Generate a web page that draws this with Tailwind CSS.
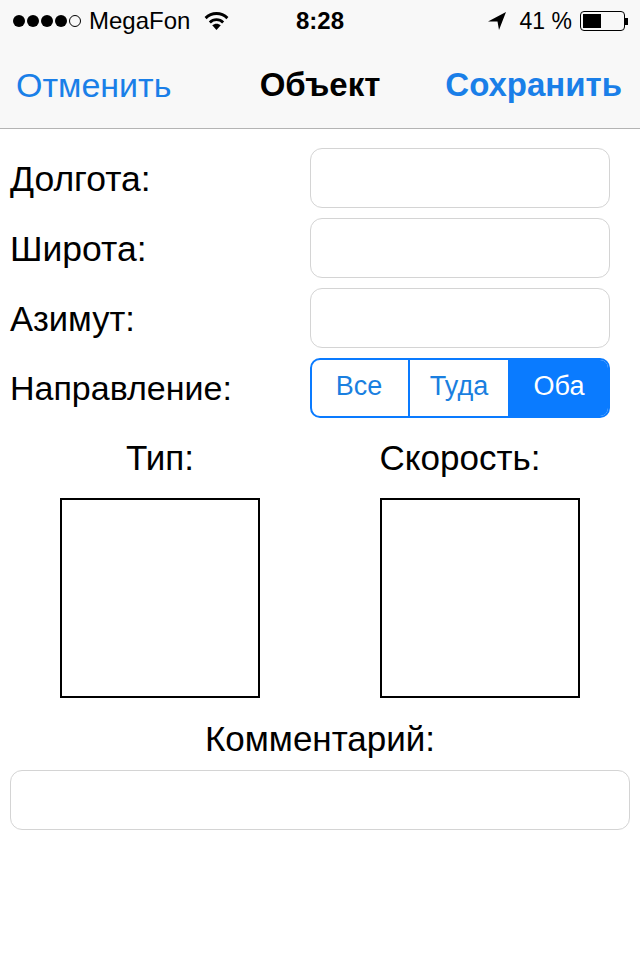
<!DOCTYPE html>
<html lang="ru">
<head>
  <meta charset="UTF-8" />
  <title>Объект</title>
  <script src="https://cdn.jsdelivr.net/npm/@tailwindcss/browser@4"></script>
</head>
<body class="bg-white font-['Liberation_Sans',sans-serif] text-black w-[640px] h-[960px] overflow-hidden">

  <!-- Status + nav -->
  <div class="bg-[#f8f8f8] border-b border-[#b4b4b4] h-[129px]">
    <div class="relative flex items-center h-[42px] pl-[13px] pr-[12px] text-[24px]">
      <div class="flex items-center gap-[2px]">
        <span class="w-[12px] h-[12px] rounded-full bg-black"></span>
        <span class="w-[12px] h-[12px] rounded-full bg-black"></span>
        <span class="w-[12px] h-[12px] rounded-full bg-black"></span>
        <span class="w-[12px] h-[12px] rounded-full bg-black"></span>
        <span class="w-[12px] h-[12px] rounded-full border border-black"></span>
      </div>
      <span class="ml-[8px]">MegaFon</span>
      <svg class="ml-[14px] mb-[2px]" width="25" height="19" viewBox="0 0 26 20" fill="none">
        <path d="M1.5 7.5C8 1 18 1 24.5 7.5" stroke="#000" stroke-width="3"/>
        <path d="M6 12C10 8 16 8 20 12" stroke="#000" stroke-width="3"/>
        <path d="M13 20L8.5 15C11 12.8 15 12.8 17.5 15Z" fill="#000"/>
      </svg>
      <span class="absolute left-[296px] font-bold text-[24px]">8:28</span>
      <div class="ml-auto flex items-center">
        <svg width="20" height="20" viewBox="0 0 20 20"><path d="M19 1L1 10.5L10.5 10.5L12 19Z" fill="#000"/></svg>
        <span class="ml-[13px] text-[23px]">41 %</span>
        <div class="ml-[8px] w-[45px] h-[20px] border border-black rounded-[4px] p-[2px]">
          <div class="w-[18px] h-full bg-black"></div>
        </div>
        <span class="w-[3px] h-[7px] bg-black"></span>
      </div>
    </div>
    <div class="relative flex items-center justify-between h-[86px] pl-[16px] pr-[18px] text-[34px] text-[#1a7fe8]">
      <span>Отменить</span>
      <span class="absolute left-0 right-0 text-center font-bold text-black text-[33px]">Объект</span>
      <span class="font-bold text-[33px]">Сохранить</span>
    </div>
  </div>

  <!-- Form -->
  <div class="flex flex-col gap-[10px] pt-[19px] pl-[10px] pr-[30px] text-[35px]">
    <div class="flex items-center justify-between h-[60px]">
      <span class="pt-[4px] text-[35.5px]">Долгота:</span>
      <div class="w-[300px] h-[60px] border border-[#d4d4d4] rounded-[12px]"></div>
    </div>
    <div class="flex items-center justify-between h-[60px]">
      <span class="pt-[4px] text-[35.5px]">Широта:</span>
      <div class="w-[300px] h-[60px] border border-[#d4d4d4] rounded-[12px]"></div>
    </div>
    <div class="flex items-center justify-between h-[60px]">
      <span class="pt-[4px] text-[34.5px]">Азимут:</span>
      <div class="w-[300px] h-[60px] border border-[#d4d4d4] rounded-[12px]"></div>
    </div>
    <div class="flex items-center justify-between h-[60px]">
      <span class="text-[34px]">Направление:</span>
      <div class="flex w-[300px] h-[60px] border-2 border-[#0a7bff] rounded-[10px] overflow-hidden text-[27px] text-[#1a7fe0]">
        <div class="flex-1 flex items-center justify-center pb-[3px] pr-[2px] border-r-2 border-[#0a7bff]">Все</div>
        <div class="w-[98px] flex items-center justify-center pb-[3px]">Туда</div>
        <div class="w-[100px] flex items-center justify-center pb-[3px] pl-[2px] bg-[#0a7bff] text-white">Оба</div>
      </div>
    </div>
  </div>

  <!-- Pickers -->
  <div class="grid grid-cols-2 w-[640px] mt-[20px] text-[35px] text-center">
    <div class="flex flex-col items-center">
      <span class="leading-[40px]">Тип:</span>
      <div class="mt-[20px] w-[200px] h-[200px] border-2 border-black"></div>
    </div>
    <div class="flex flex-col items-center">
      <span class="leading-[40px] pr-[40px]">Скорость:</span>
      <div class="mt-[20px] w-[200px] h-[200px] border-2 border-black"></div>
    </div>
  </div>

  <!-- Comment -->
  <div class="text-[35px] text-center leading-[40px] mt-[21px]">Комментарий:</div>
  <div class="mx-[10px] mt-[11px] h-[60px] border border-[#d4d4d4] rounded-[12px]"></div>

</body>
</html>
